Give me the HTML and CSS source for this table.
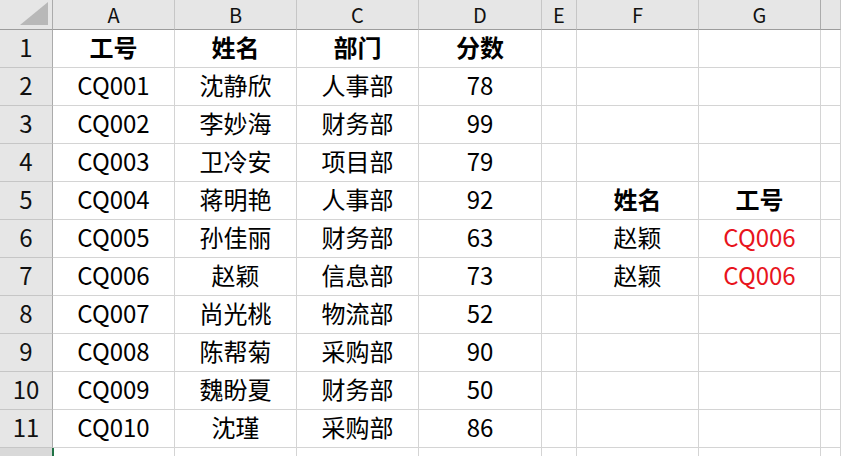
FILE: index.html
```html
<!DOCTYPE html>
<html lang="zh-CN">
<head>
<meta charset="utf-8">
<title>Sheet</title>
<link rel="stylesheet" href="styles.css">
</head>
<body>
<div class="sheet">
  <div class="corner"><span class="tri"></span></div>
  <div class="ch">A</div><div class="ch">B</div><div class="ch">C</div><div class="ch">D</div><div class="ch">E</div><div class="ch">F</div><div class="ch">G</div><div class="ch last"></div>

  <div class="rh">1</div><div class="c b">工号</div><div class="c b">姓名</div><div class="c b">部门</div><div class="c b">分数</div><div class="c"></div><div class="c"></div><div class="c"></div><div class="c"></div>
  <div class="rh">2</div><div class="c">CQ001</div><div class="c">沈静欣</div><div class="c">人事部</div><div class="c">78</div><div class="c"></div><div class="c"></div><div class="c"></div><div class="c"></div>
  <div class="rh">3</div><div class="c">CQ002</div><div class="c">李妙海</div><div class="c">财务部</div><div class="c">99</div><div class="c"></div><div class="c"></div><div class="c"></div><div class="c"></div>
  <div class="rh">4</div><div class="c">CQ003</div><div class="c">卫冷安</div><div class="c">项目部</div><div class="c">79</div><div class="c"></div><div class="c"></div><div class="c"></div><div class="c"></div>
  <div class="rh">5</div><div class="c">CQ004</div><div class="c">蒋明艳</div><div class="c">人事部</div><div class="c">92</div><div class="c"></div><div class="c b">姓名</div><div class="c b">工号</div><div class="c"></div>
  <div class="rh">6</div><div class="c">CQ005</div><div class="c">孙佳丽</div><div class="c">财务部</div><div class="c">63</div><div class="c"></div><div class="c">赵颖</div><div class="c red">CQ006</div><div class="c"></div>
  <div class="rh">7</div><div class="c">CQ006</div><div class="c">赵颖</div><div class="c">信息部</div><div class="c">73</div><div class="c"></div><div class="c">赵颖</div><div class="c red">CQ006</div><div class="c"></div>
  <div class="rh">8</div><div class="c">CQ007</div><div class="c">尚光桃</div><div class="c">物流部</div><div class="c">52</div><div class="c"></div><div class="c"></div><div class="c"></div><div class="c"></div>
  <div class="rh">9</div><div class="c">CQ008</div><div class="c">陈帮菊</div><div class="c">采购部</div><div class="c">90</div><div class="c"></div><div class="c"></div><div class="c"></div><div class="c"></div>
  <div class="rh">10</div><div class="c">CQ009</div><div class="c">魏盼夏</div><div class="c">财务部</div><div class="c">50</div><div class="c"></div><div class="c"></div><div class="c"></div><div class="c"></div>
  <div class="rh">11</div><div class="c">CQ010</div><div class="c">沈瑾</div><div class="c">采购部</div><div class="c">86</div><div class="c"></div><div class="c"></div><div class="c"></div><div class="c"></div>
  <div class="rh tail"></div><div class="c tailc"></div><div class="c"></div><div class="c"></div><div class="c"></div><div class="c"></div><div class="c"></div><div class="c"></div><div class="c"></div>
</div>
</body>
</html>
```
FILE: styles.css
```css
html, body {
  margin: 0;
  padding: 0;
  background: #fff;
  overflow: hidden;
}
.sheet {
  display: grid;
  grid-template-columns: 53px 122px 122px 122px 123px 35px 122px 122px 1fr;
  grid-template-rows: 30px repeat(11, 38px) 38px;
  width: 841px;
  height: 456px;
  overflow: hidden;
  font-family: "Noto Sans CJK SC", "Noto Sans", sans-serif;
  color: #000;
  line-height: 1.15;
}
.sheet > div {
  box-sizing: border-box;
  display: flex;
  align-items: center;
  justify-content: center;
  white-space: nowrap;
}
.corner {
  background: #e6e6e6;
  border-right: 1px solid #ababab;
  border-bottom: 1px solid #9c9c9c;
  position: relative;
}
.tri {
  position: absolute;
  right: 4px;
  bottom: 4px;
  width: 28px;
  height: 23px;
  background: #b8b8b8;
  clip-path: polygon(100% 0, 100% 100%, 0 100%);
}
.ch {
  background: #e6e6e6;
  border-right: 1px solid #c6c6c6;
  border-bottom: 1px solid #9c9c9c;
  font-size: 20px;
  color: #111;
}
.ch.last {
  border-left: 1px solid #ababab;
  margin-left: -1px;
}
.rh {
  background: #e6e6e6;
  border-right: 1px solid #ababab;
  border-bottom: 1px solid #c6c6c6;
  font-size: 24px;
  color: #111;
  padding-bottom: 3px;
}
.rh.tail {
  background: #d9d9d9;
}
.c {
  border-right: 1px solid #d4d4d4;
  border-bottom: 1px solid #d4d4d4;
  font-size: 24px;
  padding-bottom: 3px;
}
.c.tailc {
  border-left: 2px solid #217346;
  margin-left: -1px;
}
.b {
  font-weight: 700;
}
.red {
  color: #e8141c;
}
```
